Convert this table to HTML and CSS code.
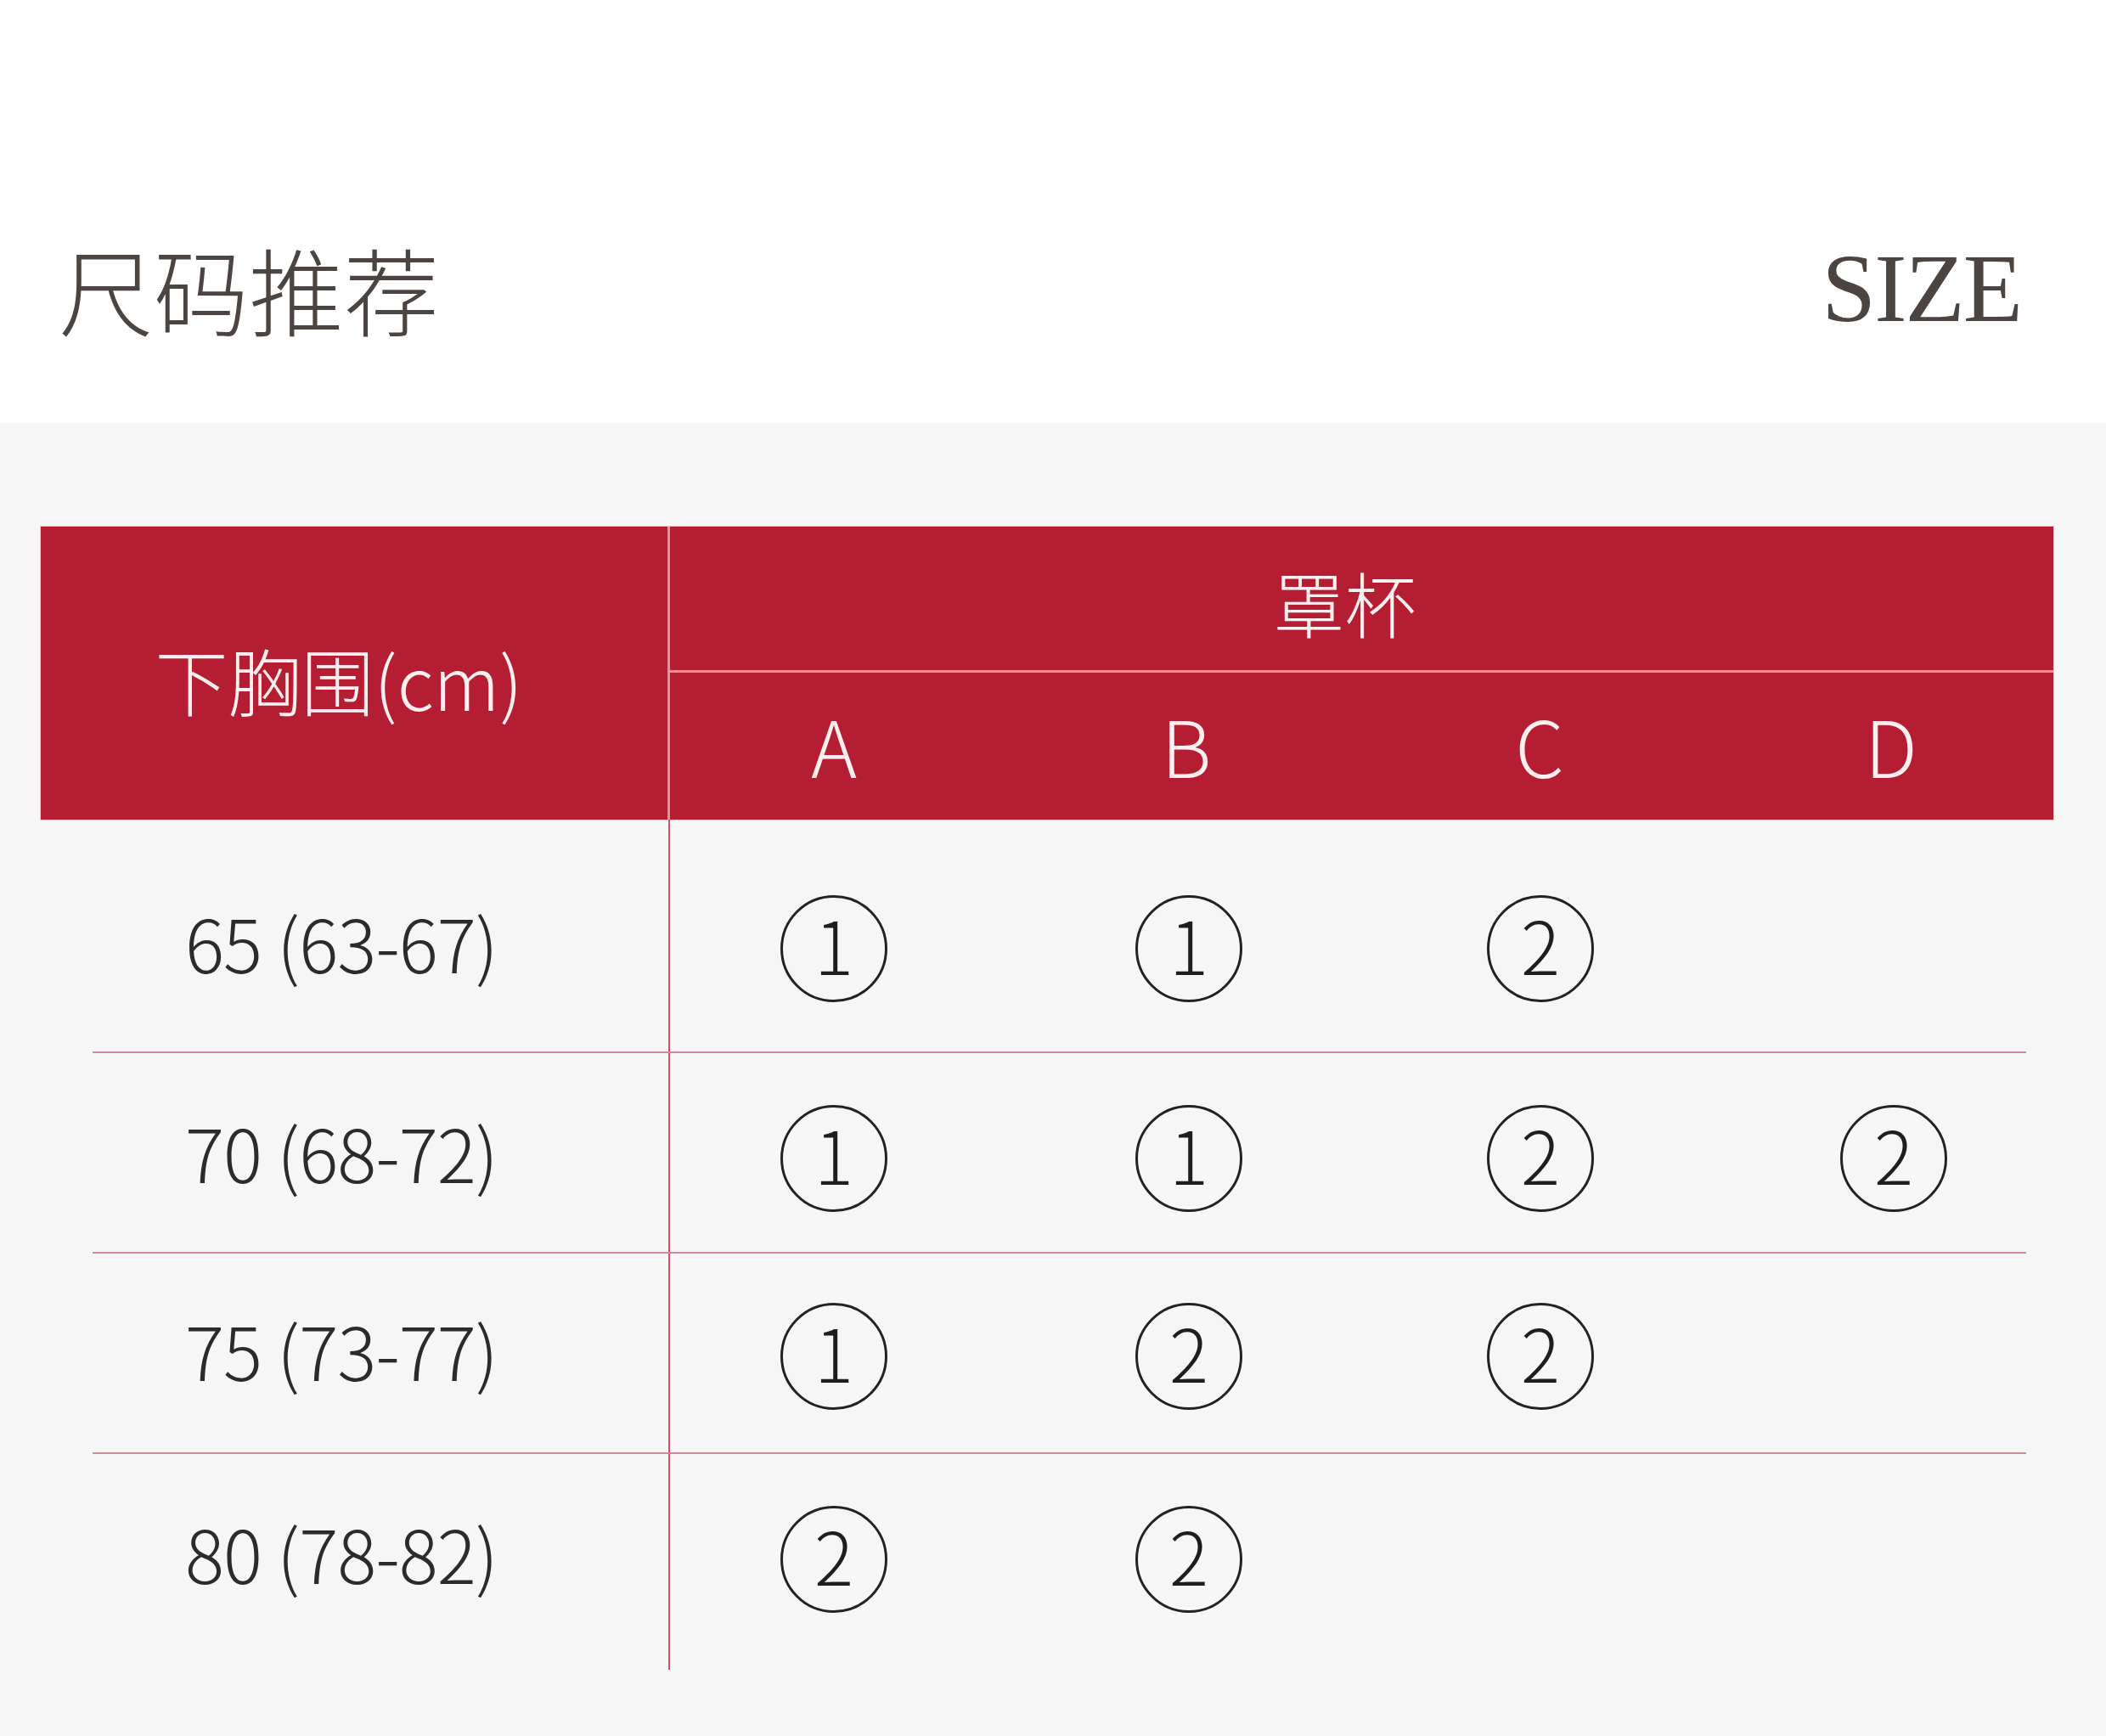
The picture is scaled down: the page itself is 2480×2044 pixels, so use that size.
FILE: index.html
```html
<!DOCTYPE html>
<html lang="zh-CN">
<head>
<meta charset="utf-8">
<title>尺码推荐 SIZE</title>
<link rel="stylesheet" href="styles.css">
</head>
<body>
<div class="page">
  <header class="top">
    <h1 class="title">尺码推荐</h1>
    <div class="size">SIZE</div>
  </header>
  <section class="chart">
    <div class="thead">
      <div class="th-band">下胸围(cm)</div>
      <div class="th-cups">
        <div class="th-cup-title">罩杯</div>
        <div class="th-cup-row">
          <div class="hc c1">A</div>
          <div class="hc c2">B</div>
          <div class="hc c3">C</div>
          <div class="hc c4">D</div>
        </div>
      </div>
    </div>
    <div class="tbody">
      <div class="row r1">
        <div class="band"><span class="band-text">65 (63-67)</span></div>
        <div class="cell c1"><span class="mark">1</span></div>
        <div class="cell c2"><span class="mark">1</span></div>
        <div class="cell c3"><span class="mark">2</span></div>
        <div class="cell c4"></div>
      </div>
      <div class="row r2">
        <div class="band"><span class="band-text">70 (68-72)</span></div>
        <div class="cell c1"><span class="mark">1</span></div>
        <div class="cell c2"><span class="mark">1</span></div>
        <div class="cell c3"><span class="mark">2</span></div>
        <div class="cell c4"><span class="mark">2</span></div>
      </div>
      <div class="row r3">
        <div class="band"><span class="band-text">75 (73-77)</span></div>
        <div class="cell c1"><span class="mark">1</span></div>
        <div class="cell c2"><span class="mark">2</span></div>
        <div class="cell c3"><span class="mark">2</span></div>
        <div class="cell c4"></div>
      </div>
      <div class="row r4">
        <div class="band"><span class="band-text">80 (78-82)</span></div>
        <div class="cell c1"><span class="mark">2</span></div>
        <div class="cell c2"><span class="mark">2</span></div>
        <div class="cell c3"></div>
        <div class="cell c4"></div>
      </div>
    </div>
  </section>
</div>
</body>
</html>
```
FILE: styles.css
```css
* { box-sizing: border-box; }
html, body {
  margin: 0;
  padding: 0;
  background: #f6f6f6;
}
.page {
  width: 2480px;
  height: 2044px;
  background: #f6f6f6;
  font-family: "Noto Sans CJK SC", "Noto Sans", sans-serif;
}
.top {
  height: 498px;
  background: #ffffff;
  display: flex;
  justify-content: space-between;
  align-items: center;
  padding: 180px 100px 0 69px;
}
.title {
  margin: 0;
  font-family: "Noto Sans CJK SC", sans-serif;
  font-weight: 300;
  font-size: 112px;
  line-height: 1;
  color: #4b4441;
}
.size {
  font-family: "Liberation Serif", "Times New Roman", serif;
  font-size: 115px;
  letter-spacing: -2px;
  line-height: 1;
  color: #4b4441;
}
.chart {
  padding: 122px 62px 0 48px;
}
.thead {
  display: grid;
  grid-template-columns: 741px 1629px;
  height: 345px;
  background: #b51e32;
  color: #fdeef0;
  box-shadow: 0 0 0 1px #f2c3c9;
  font-weight: 300;
}
.th-band {
  display: flex;
  align-items: center;
  justify-content: center;
  padding: 14px 36px 0 0;
  font-size: 86px;
  border-right: 3px solid #ec8f9c;
}
.th-cups {
  display: grid;
  grid-template-rows: 172px 173px;
}
.th-cup-title {
  display: flex;
  align-items: center;
  justify-content: center;
  padding: 8px 40px 0 0;
  font-size: 84px;
  border-bottom: 3px solid #ec8f9c;
}
.th-cup-row {
  display: grid;
  grid-template-columns: 398px 416px 416px 396px;
  align-items: center;
  padding-bottom: 6px;
}
.hc {
  text-align: center;
  font-size: 92px;
  line-height: 1;
}
.th-cup-row .c1 { padding-right: 12px; }
.th-cup-row .c2 { padding-left: 4px; }
.th-cup-row .c3 { padding-left: 4px; }
.th-cup-row .c4 { padding-left: 20px; }

.tbody {
  margin-left: 61px;
  width: 2277px;
}
.row {
  display: grid;
  grid-template-columns: 680px 401px 416px 416px 364px;
  align-items: stretch;
}
.row + .row {
  border-top: 2px solid #d48a96;
}
.r1 { height: 273px; }
.r2 { height: 236px; }
.r3 { height: 236px; }
.r4 { height: 256px; }
.band, .cell {
  display: flex;
  align-items: center;
  justify-content: center;
}
.r1 .band, .r1 .cell { padding-top: 30px; }
.r2 .band, .r2 .cell { padding-top: 14px; }
.r3 .band, .r3 .cell { padding-top: 8px; }
.r4 .band, .r4 .cell { padding-bottom: 6px; }
.band {
  padding-right: 92px;
  border-right: 2px solid #c95567;
  font-size: 86px;
  font-weight: 300;
  color: #2b2b2b;
  line-height: 1;
}
.band-text {
  display: block;
  padding-bottom: 16px;
  letter-spacing: -1px;
}
.row .c1 { padding-right: 15px; }
.row .c2 { padding-left: 4px; }
.row .c4 { padding-left: 52px; }
.mark {
  width: 126px;
  height: 126px;
  border: 3px solid #222222;
  border-radius: 50%;
  display: flex;
  align-items: center;
  justify-content: center;
  font-size: 86px;
  font-weight: 300;
  line-height: 1;
  color: #1e1e1e;
  padding-bottom: 12px;
}
```
